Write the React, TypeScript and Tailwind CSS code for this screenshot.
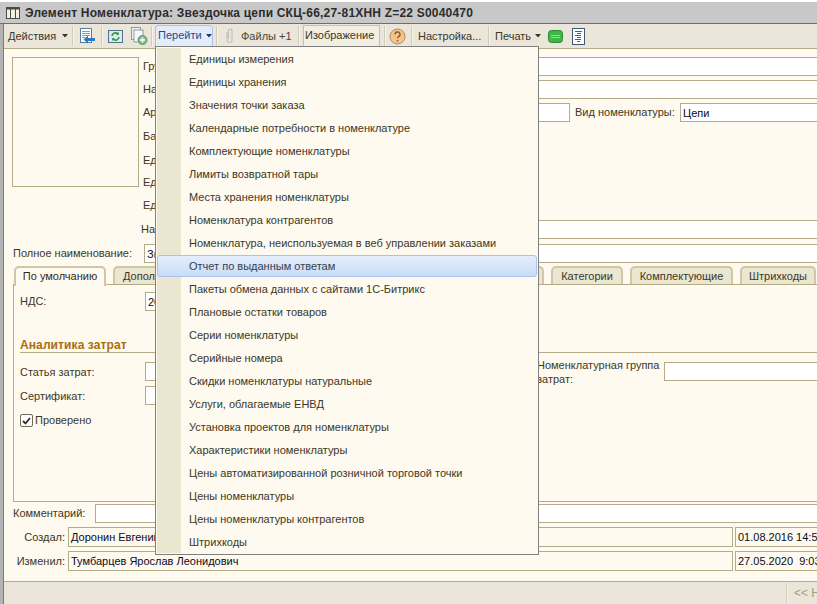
const menuItems = [
  "Единицы измерения",
  "Единицы хранения",
  "Значения точки заказа",
  "Календарные потребности в номенклатуре",
  "Комплектующие номенклатуры",
  "Лимиты возвратной тары",
  "Места хранения номенклатуры",
  "Номенклатура контрагентов",
  "Номенклатура, неиспользуемая в веб управлении заказами",
  "Отчет по выданным ответам",
  "Пакеты обмена данных с сайтами 1С-Битрикс",
  "Плановые остатки товаров",
  "Серии номенклатуры",
  "Серийные номера",
  "Скидки номенклатуры натуральные",
  "Услуги, облагаемые ЕНВД",
  "Установка проектов для номенклатуры",
  "Характеристики номенклатуры",
  "Цены автоматизированной розничной торговой точки",
  "Цены номенклатуры",
  "Цены номенклатуры контрагентов",
  "Штрихкоды",
]

const Sep = ({ className = "" }: { className?: string }) => (
  <span className={`w-[2px] h-[20px] border-l border-[#d3ccb8] bg-[#f7f3ea] shrink-0 ${className}`} />
)

const Arrow = ({ className = "" }: { className?: string }) => (
  <svg width="6" height="4" viewBox="0 0 6 4" className={`shrink-0 ${className}`}>
    <path d="M0 0h6L3 3.5z" fill="currentColor" />
  </svg>
)

const Field = ({ className = "", value = "", plain = false }: { className?: string; value?: string; plain?: boolean }) => (
  <div
    className={`h-[19px] border border-[#b5ab86] ${plain ? "bg-[#fffaf0]" : "bg-white"} pl-[2px] text-[11px] leading-[18px] text-[#0a0a23] whitespace-pre overflow-hidden ${className}`}
  >
    {value}
  </div>
)

const Tab = ({ label, className = "" }: { label: string; className?: string }) => (
  <div
    className={`h-[18px] border-2 border-b-0 border-[#cfc8a8] rounded-t-[5px] bg-[#ebe6d0] text-center leading-[17px] overflow-hidden whitespace-nowrap shrink-0 ${className}`}
  >
    {label}
  </div>
)

const App = () => {
  return (
    <div className="relative w-[817px] h-[604px] overflow-hidden flex flex-col bg-white text-[11px] text-[#3a3826] font-['Liberation_Sans',sans-serif]">
      <div className="h-[2px] shrink-0 bg-white" />

      {/* заголовок окна */}
      <div className="h-[22px] shrink-0 flex items-center pl-[6px] pt-[1px] bg-[#c8c8c8] border-b border-[#6f6f6f] font-bold text-[12px] text-[#2c2c2c] tracking-[0.2px] whitespace-nowrap">
        <svg width="14" height="12" viewBox="0 0 14 12" className="mr-[5px] shrink-0">
          <rect x="0.5" y="0.5" width="13" height="11" fill="#f6f0dc" stroke="#4a4a4a" />
          <path d="M0 1.5h14" stroke="#4a4a4a" strokeWidth="2" />
          <path d="M4.5 1v11M9.5 1v11" stroke="#4a4a4a" />
        </svg>
        Элемент Номенклатура: Звездочка цепи СКЦ-66,27-81ХНН Z=22 S0040470
      </div>

      <div className="flex-1 min-h-0 flex flex-col border-l-[3px] border-[#b4b4b4]">
        <div className="flex-1 min-h-0 flex flex-col border-l border-[#7a7a7a]">
          {/* панель инструментов */}
          <div className="h-[25px] shrink-0 flex items-center bg-[#ebe5da] border-b border-[#b5ab86] pl-[4px] whitespace-nowrap">
            <span className="w-[50px] shrink-0">Действия</span>
            <Arrow className="ml-[4px] text-[#3a3826]" />
            <Sep className="ml-[4px]" />
            <svg width="17" height="18" viewBox="0 0 17 18" className="ml-[5px] shrink-0">
              <rect x="1.5" y="1.5" width="11" height="14" fill="#fff" stroke="#5b7ba5" />
              <path d="M3 4.5h8M3 6.5h8M3 8.5h8M3 10.5h3" stroke="#8a9bb5" />
              <path d="M16 11H9V8.5L4.5 12.5 9 16.5V14h7z" fill="#2a7db8" />
            </svg>
            <Sep className="ml-[5px]" />
            <svg width="15" height="15" viewBox="0 0 15 15" className="ml-[5px] shrink-0">
              <rect x="0.5" y="1.5" width="14" height="12" fill="#dce9f2" stroke="#51708a" />
              <path d="M4 7a3.5 3.5 0 0 1 6-2M11 8a3.5 3.5 0 0 1-6 2" fill="none" stroke="#2f9a3c" strokeWidth="1.6" />
              <path d="M10.8 3v3H8zM4.2 12V9H7z" fill="#2f9a3c" />
            </svg>
            <svg width="17" height="18" viewBox="0 0 17 18" className="ml-[8px] shrink-0">
              <rect x="0.5" y="0.5" width="9" height="12" fill="#eef1f4" stroke="#8c9aa8" />
              <rect x="3" y="3" width="9" height="12" fill="#f7f8fa" stroke="#8c9aa8" />
              <circle cx="11.5" cy="13" r="4.5" fill="#7fb98a" stroke="#5c9a6a" />
              <path d="M9 13h5M11.5 10.5v5" stroke="#fff" strokeWidth="1.6" />
            </svg>
            <Sep className="ml-[3px]" />
            {/* открытая кнопка меню */}
            <div className="ml-[2px] w-[58px] h-[22px] mt-[-1px] flex items-center shrink-0 pl-[2px] border border-[#a9c4ea] rounded-t-[3px] bg-[#e3edf9] text-[#1d4a8c]">
              <span className="w-[44px] shrink-0">Перейти</span>
              <Arrow className="ml-[4px] text-[#1d3c70]" />
            </div>
            <Sep className="ml-[3px]" />
            <svg width="9" height="16" viewBox="0 0 9 16" className="ml-[7px] shrink-0">
              <path d="M2 4v8a2.5 2.5 0 0 0 5 0V3a1.8 1.8 0 0 0-3.6 0v8" fill="none" stroke="#c4c2bc" strokeWidth="1.2" />
            </svg>
            <span className="ml-[7px] w-[51px] shrink-0 text-[#4a4836]">Файлы +1</span>
            <Sep className="ml-[6px]" />
            <div className="ml-[3px] w-[77px] h-[22px] mt-[-1px] shrink-0 flex items-center pl-[1px] border border-[#c9c19f] bg-[#f3eee2]">Изображение</div>
            <Sep className="ml-[4px]" />
            <svg width="17" height="17" viewBox="0 0 17 17" className="ml-[3px] shrink-0">
              <circle cx="8.5" cy="8.5" r="7.5" fill="#f3c58c" stroke="#b48a5a" />
              <path d="M6 6.5a2.5 2.5 0 1 1 3.6 2.2c-.8.4-1.1.8-1.1 1.6M8.5 12v1.6" fill="none" stroke="#8a5a22" strokeWidth="1.4" />
            </svg>
            <Sep className="ml-[5px]" />
            <span className="ml-[5px] w-[65px] shrink-0">Настройка...</span>
            <Sep className="ml-[5px]" />
            <span className="ml-[5px] w-[36px] shrink-0">Печать</span>
            <Arrow className="ml-[4px] text-[#3a3826]" />
            <svg width="15" height="13" viewBox="0 0 15 13" className="ml-[7px] shrink-0">
              <rect x="0.5" y="0.5" width="14" height="12" rx="3" fill="#3fb54a" stroke="#2a8a34" />
              <path d="M3 5.5h9M3 7.5h9" stroke="#8fdc96" />
            </svg>
            <svg width="13" height="17" viewBox="0 0 13 17" className="ml-[9px] shrink-0">
              <rect x="0.5" y="0.5" width="12" height="16" fill="#fff" stroke="#3c5a78" />
              <path d="M3 3.5h7M5 5.5h4M3 7.5h6M5 9.5h4M3 11.5h6M5 13.5h3" stroke="#1f6f9a" />
            </svg>
          </div>

          {/* форма */}
          <div className="flex-1 min-h-0 flex flex-col bg-[#fffaf0] pl-[9px]">
            <div className="flex h-[171px] pt-[8px] shrink-0">
              <div className="w-[127px] -ml-[1px] h-[130px] border border-[#b5ab86] shrink-0" />
              <div className="flex-1 ml-[4px] flex flex-col -mr-[4px]">
                <div className="flex items-center">
                  <span className="w-[97px] shrink-0">Группа</span>
                  <Field className="flex-1" />
                </div>
                <div className="flex items-center mt-[4px]">
                  <span className="w-[97px] shrink-0">Наименование</span>
                  <Field className="flex-1" />
                </div>
                <div className="flex items-center mt-[4px]">
                  <span className="w-[97px] shrink-0">Артикул</span>
                  <Field className="w-[330px]" />
                  <span className="ml-[5px] w-[105px] shrink-0 whitespace-nowrap">Вид номенклатуры:</span>
                  <Field className="flex-1" value="Цепи" />
                </div>
                <div className="h-[20px] mt-[4px] leading-[20px]">Базовая</div>
                <div className="h-[20px] mt-[4px] leading-[20px]">Ед. хранения</div>
                <div className="h-[20px] mt-[2px] leading-[20px]">Ед. веса</div>
                <div className="h-[20px] mt-[3px] leading-[20px]">Ед. объема</div>
              </div>
            </div>
            <div className="flex items-center h-[19px] shrink-0 -mr-[4px]">
              <span className="ml-[128px] w-[60px] shrink-0 whitespace-nowrap">Наценка</span>
              <Field className="flex-1" />
            </div>
            <div className="flex items-center h-[19px] mt-[5px] shrink-0 -mr-[4px]">
              <span className="w-[131px] shrink-0 whitespace-nowrap">Полное наименование:</span>
              <Field className="flex-1" value="Звездочка цепи" />
            </div>

            {/* закладки */}
            <div className="flex items-start h-[20px] mt-[3px] pl-[1px] gap-[7px] shrink-0 relative z-10">
              <div className="h-[20px] w-[92px] border-2 border-b-0 border-[#cfc8a8] rounded-t-[5px] bg-[#fffaf0] text-center leading-[17px] text-[#2e2c1c] shrink-0">По умолчанию</div>
              <Tab label="Дополнительно" className="w-[431px] text-left pl-[8px]" />
              <Tab label="Категории" className="w-[72px]" />
              <Tab label="Комплектующие" className="w-[103px]" />
              <Tab label="Штрихкоды" className="w-[76px]" />
            </div>
            <div className="h-[218px] shrink-0 border border-[#b5ab86] border-r-0 -mr-[4px] flex flex-col pl-[6px] -mt-[2px]">
              <div className="flex items-center mt-[6px] h-[20px]">
                <span className="w-[125px] shrink-0">НДС:</span>
                <Field className="w-[100px]" value="20%" />
              </div>
              <div className="mt-[26px] h-[16px] border-b border-[#b5ab86] font-bold text-[12px] text-[#a8700c] leading-[16px] tracking-[0.1px]">Аналитика затрат</div>
              <div className="flex mt-[9px] h-[19px]">
                <span className="w-[125px] shrink-0 leading-[21px]">Статья затрат:</span>
                <Field className="w-[200px]" />
                <span className="ml-[192px] w-[127px] shrink-0 leading-[14px] -mt-[4px]">Номенклатурная группа затрат:</span>
                <Field className="flex-1" />
              </div>
              <div className="flex mt-[5px] h-[19px]">
                <span className="w-[125px] shrink-0 leading-[21px]">Сертификат:</span>
                <Field className="w-[200px]" />
              </div>
              <label className="flex items-center mt-[9px] h-[13px]">
                <span className="w-[13px] h-[13px] border border-[#6f6b58] rounded-[2px] bg-white flex items-center justify-center shrink-0">
                  <svg width="9" height="8" viewBox="0 0 9 8">
                    <path d="M1 4l2.5 2.5L8 1" fill="none" stroke="#2e2e2e" strokeWidth="1.8" />
                  </svg>
                </span>
                <span className="ml-[2px]">Проверено</span>
              </label>
            </div>

            {/* низ формы */}
            <div className="flex items-center h-[19px] mt-[2px] shrink-0 -mr-[4px]">
              <span className="w-[82px] shrink-0">Комментарий:</span>
              <Field className="flex-1" />
            </div>
            <div className="flex items-center h-[20px] mt-[4px] shrink-0 -mr-[4px]">
              <span className="w-[55px] shrink-0 text-right pr-[3px]">Создал:</span>
              <Field className="w-[665px] h-[20px]" plain value="Доронин Евгений Николаевич" />
              <Field className="flex-1 h-[20px] ml-[2px]" plain value="01.08.2016 14:59:01" />
            </div>
            <div className="flex items-center h-[20px] mt-[4px] shrink-0 -mr-[4px]">
              <span className="w-[55px] shrink-0 text-right pr-[3px]">Изменил:</span>
              <Field className="w-[665px] h-[20px]" plain value="Тумбарцев Ярослав Леонидович" />
              <Field className="flex-1 h-[20px] ml-[2px]" plain value="27.05.2020  9:03:44" />
            </div>
          </div>

          {/* строка состояния */}
          <div className="h-[23px] shrink-0 flex items-center border-t border-[#b5ab86] bg-[#ebe5da] pl-[782px] whitespace-nowrap overflow-hidden">
            <Sep className="h-[18px]" />
            <span className="ml-[6px] text-[#a39c82] text-[12px]">&lt;&lt; Назад</span>
          </div>
        </div>
      </div>

      {/* выпадающее меню */}
      <div className="absolute z-20 left-[155px] top-[46px] w-[384px] h-[509px] border border-[#808080] p-[1px] bg-[#fffaf0] flex flex-col">
        <div className="absolute left-[1px] top-[1px] bottom-[1px] w-[24px] bg-[#ebe6d0]" />
        {menuItems.map((item, i) => (
          <div
            key={item}
            className={`relative shrink-0 whitespace-nowrap ${
              i === 9
                ? "h-[22px] mb-[1px] w-[380px] pl-[31px] leading-[20px] rounded-[3px] border border-[#a9c4ea] bg-gradient-to-b from-[#e4eefc] to-[#c9dcf8] text-[#33414f]"
                : "h-[23px] pl-[32px] leading-[23px]"
            }`}
          >
            {item}
          </div>
        ))}
      </div>
    </div>
  )
}

export default App
